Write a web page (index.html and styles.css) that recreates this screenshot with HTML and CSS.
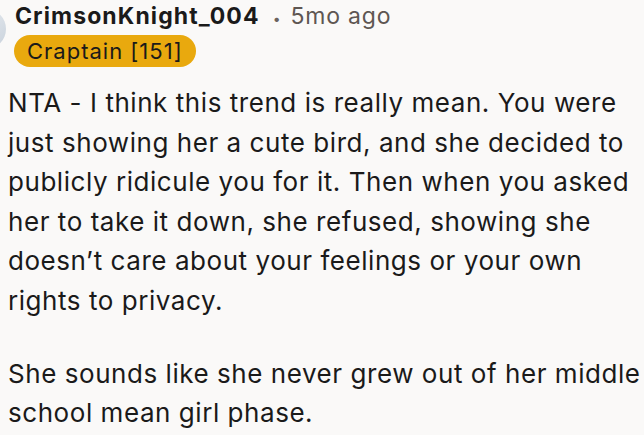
FILE: index.html
```html
<!DOCTYPE html>
<html>
<head>
<meta charset="utf-8">
<link rel="stylesheet" href="styles.css">
</head>
<body>
<div class="comment">
  <div class="avatar"></div>
  <div class="head">
    <div class="meta">
      <span class="name">CrimsonKnight_004</span>
      <span class="dot">•</span>
      <span class="time">5mo ago</span>
    </div>
    <div class="flair">Craptain [151]</div>
  </div>
  <div class="body">
    <p>NTA - I think this trend is really mean. You were just showing her a cute bird, and she decided to publicly ridicule you for it. Then when you asked her to take it down, she refused, showing she doesn’t care about your feelings or your own rights to privacy.</p>
    <p>She sounds like she never grew out of her middle school mean girl phase.</p>
  </div>
</div>
</body>
</html>
```
FILE: styles.css
```css
html, body {
  margin: 0;
  padding: 0;
  background: #faf9f8;
  width: 644px;
  height: 435px;
  overflow: hidden;
}
body {
  font-family: Inter, "Noto Sans", sans-serif;
  color: #1a1a1a;
}
.comment {
  position: relative;
  padding: 0 0 0 8px;
}
.avatar {
  position: absolute;
  left: -34px;
  top: 9px;
  width: 40px;
  height: 40px;
  border-radius: 50%;
  background: linear-gradient(135deg, #eef1f4, #c9d2dc);
}
.head {
  padding-left: 7px;
}
.meta {
  display: flex;
  align-items: baseline;
  height: 32px;
  line-height: 32px;
}
.name {
  font-weight: 700;
  font-size: 23px;
  letter-spacing: 1.1px;
}
.dot {
  color: #6b625d;
  font-size: 14px;
  margin: 0 10px 0 13px;
}
.time {
  color: #5e5652;
  font-size: 23px;
  letter-spacing: 0.8px;
}
.flair {
  display: inline-block;
  margin-top: 3px;
  margin-left: -1px;
  height: 32px;
  line-height: 32px;
  padding: 0 13px;
  border-radius: 16px;
  background: #e9a90e;
  color: #1a1a1a;
  font-size: 22px;
  letter-spacing: 1px;
}
.body {
  margin-top: 16px;
  font-size: 26px;
  line-height: 39.6px;
  letter-spacing: 0.55px;
}
.body p {
  margin: 0 0 33px 0;
}
.body p:last-child {
  margin-bottom: 0;
}
```
